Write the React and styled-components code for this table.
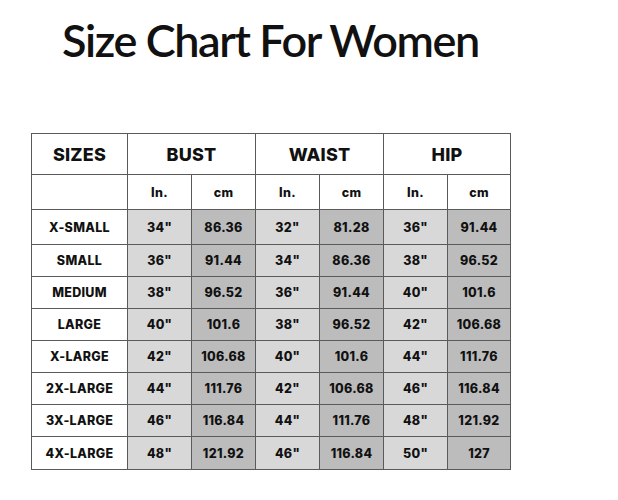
import React from 'react'
import styled, { createGlobalStyle } from 'styled-components'

const GlobalStyle = createGlobalStyle`
  html, body {
    margin: 0;
    padding: 0;
    background: #fff;
  }
`

const rows = [
  ['X-SMALL', '34"', '86.36', '32"', '81.28', '36"', '91.44'],
  ['SMALL', '36"', '91.44', '34"', '86.36', '38"', '96.52'],
  ['MEDIUM', '38"', '96.52', '36"', '91.44', '40"', '101.6'],
  ['LARGE', '40"', '101.6', '38"', '96.52', '42"', '106.68'],
  ['X-LARGE', '42"', '106.68', '40"', '101.6', '44"', '111.76'],
  ['2X-LARGE', '44"', '111.76', '42"', '106.68', '46"', '116.84'],
  ['3X-LARGE', '46"', '116.84', '44"', '111.76', '48"', '121.92'],
  ['4X-LARGE', '48"', '121.92', '46"', '116.84', '50"', '127'],
]

const Page = styled.div`
  width: 618px;
  height: 500px;
  padding: 12px 0 0 31px;
  box-sizing: border-box;
`

const Title = styled.h1`
  margin: 0 0 0 31px;
  font-family: 'Lato', 'Liberation Sans', sans-serif;
  font-weight: 600;
  font-size: 45px;
  line-height: 56px;
  letter-spacing: -1.4px;
  color: #111;
`

const Table = styled.table`
  margin-top: 65px;
  border-collapse: collapse;
  table-layout: fixed;
  font-family: 'Inter', 'Liberation Sans', sans-serif;
  color: #111;
`

const Cell = styled.td`
  border: 1px solid #5a5a5a;
  text-align: center;
  vertical-align: middle;
  padding: 0;
  font-weight: 800;
  font-size: ${p => (p.$head ? '18px' : '12.5px')};
  letter-spacing: ${p => (p.$head ? '0.2px' : '0.3px')};
  background: ${p => (p.$tone === 'light' ? '#d8d8d8' : p.$tone === 'dark' ? '#bcbcbc' : '#fff')};
`

const Row = styled.tr`
  height: ${p => p.$h}px;
`

const widths = [96, 64, 64, 64, 64, 64, 63]
const heights = [35, 32, 32, 32, 32, 32, 32, 33]

export default function App() {
  return (
    <Page>
      <GlobalStyle />
      <Title>Size Chart For Women</Title>
      <Table>
        <colgroup>
          {widths.map((w, i) => <col key={i} style={{ width: w }} />)}
        </colgroup>
        <tbody>
          <Row $h={41}>
            <Cell $head>SIZES</Cell>
            <Cell $head colSpan={2}>BUST</Cell>
            <Cell $head colSpan={2}>WAIST</Cell>
            <Cell $head colSpan={2}>HIP</Cell>
          </Row>
          <Row $h={35}>
            <Cell />
            {['In.', 'cm', 'In.', 'cm', 'In.', 'cm'].map((t, i) => <Cell key={i}>{t}</Cell>)}
          </Row>
          {rows.map((r, ri) => (
            <Row key={r[0]} $h={heights[ri]}>
              {r.map((v, i) => (
                <Cell key={i} $tone={i === 0 ? undefined : i % 2 ? 'light' : 'dark'}>{v}</Cell>
              ))}
            </Row>
          ))}
        </tbody>
      </Table>
    </Page>
  )
}
